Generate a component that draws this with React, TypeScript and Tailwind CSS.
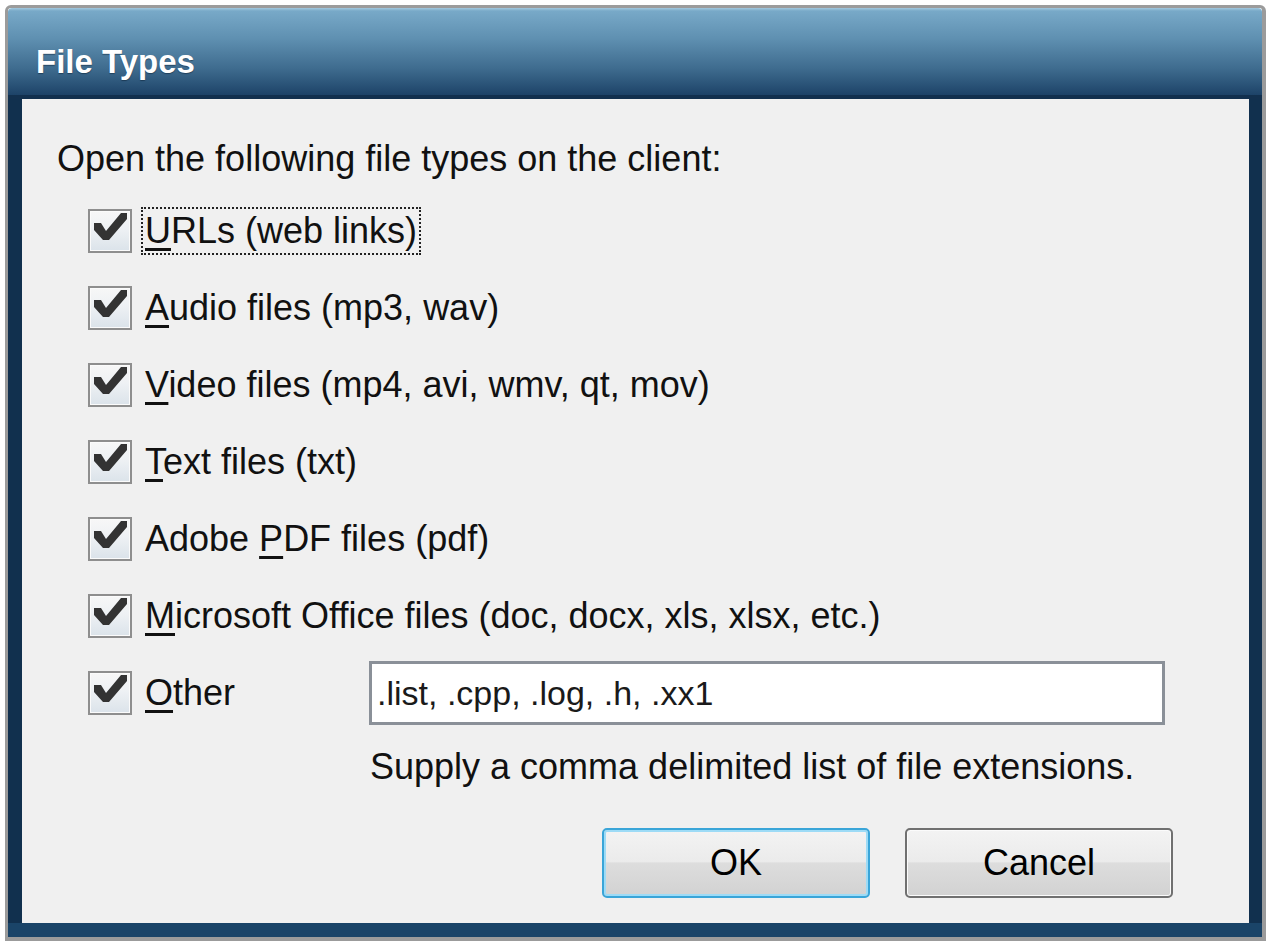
import React from 'react'

const font = { fontFamily: '"Liberation Sans", Arial, sans-serif' }

type Row = { pre?: string; key: string; rest: string; focus?: boolean }

const rows: Row[] = [
  { key: 'U', rest: 'RLs (web links)', focus: true },
  { key: 'A', rest: 'udio files (mp3, wav)' },
  { key: 'V', rest: 'ideo files (mp4, avi, wmv, qt, mov)' },
  { key: 'T', rest: 'ext files (txt)' },
  { pre: 'Adobe ', key: 'P', rest: 'DF files (pdf)' },
  { key: 'M', rest: 'icrosoft Office files (doc, docx, xls, xlsx, etc.)' },
]

const CheckBox = () => (
  <div className="flex-shrink-0 w-[44px] h-[44px] border-2 border-[#8e8e8e] bg-[linear-gradient(to_bottom,#f7f7f7_0%,#eef1f4_45%,#dbe3ea_100%)] shadow-[inset_0_0_0_1px_#fbfbfb]">
    <svg viewBox="0 0 40 40" className="w-[40px] h-[40px]">
      <polygon points="4,12 11,12 16,20 31,2 37,2 37,8 19,29 13,29 4,19" fill="#333333" />
    </svg>
  </div>
)

const Label = ({ row }: { row: Row }) => (
  <span
    className={`inline-block px-[2px] py-[2px] border-2 whitespace-nowrap ${
      row.focus ? 'border-dotted border-[#222]' : 'border-transparent'
    }`}
  >
    {row.pre}
    <span className="underline decoration-[3px] underline-offset-[5px]">{row.key}</span>
    {row.rest}
  </span>
)

const Button = ({ text, focused }: { text: string; focused?: boolean }) => (
  <div
    className={`flex justify-center items-center w-[268px] h-[70px] rounded-[5px] border-2 bg-[linear-gradient(to_bottom,#f3f3f3_0%,#ebebeb_48%,#dddddd_50%,#d2d2d2_100%)] text-[36px] leading-[40px] text-black ${
      focused
        ? 'border-[#3aa5d8] shadow-[inset_0_0_0_2px_#9ddbf6]'
        : 'border-[#707070] shadow-[inset_0_0_0_1px_#fbfbfb]'
    }`}
  >
    {text}
  </div>
)

export default function App() {
  return (
    <div className="w-[1276px] h-[943px] bg-white pt-[5px] pl-[5px]" style={font}>
      <div className="flex flex-col w-[1261px] h-[936px] rounded-t-[6px] border-[3px] border-r-4 border-b-4 border-[#9b9b9b] overflow-hidden">
        <div className="flex-shrink-0 h-[87px] pl-[28px] pt-[34px] rounded-t-[4px] bg-[linear-gradient(to_bottom,#a2c8de_0px,#78a9c8_3px,#5f90b1_35%,#3e6b8e_70%,#1d4368_100%)]">
          <p className="text-[33px] leading-[40px] font-bold text-white [text-shadow:0_1px_1px_rgba(10,30,50,0.5)]">
            File Types
          </p>
        </div>
        <div className="flex-shrink-0 h-[4px] bg-[#12304e]" />
        <div className="flex flex-grow">
          <div className="w-[14px] bg-[#11304e]" />
          <div className="flex flex-col flex-grow bg-[#f0f0f0] pt-[40px] pl-[35px] text-[36px] leading-[40px] text-[#111]">
            <p className="h-[40px]">Open the following file types on the client:</p>
            <div className="flex flex-col gap-[33px] mt-[30px] ml-[31px]">
              {rows.map((row) => (
                <div key={row.key} className="flex items-center h-[44px] gap-[9px]">
                  <CheckBox />
                  <Label row={row} />
                </div>
              ))}
              <div className="flex items-center h-[44px] gap-[9px]">
                <CheckBox />
                <div className="w-[219px]">
                  <Label row={{ key: 'O', rest: 'ther' }} />
                </div>
                <div className="flex items-center flex-shrink-0 w-[796px] h-[64px] border-[3px] border-[#8a9098] bg-white pl-[5px] text-[34px] text-[#1a1a1a]">
                  .list, .cpp, .log, .h, .xx1
                </div>
              </div>
            </div>
            <p className="h-[40px] mt-[32px] ml-[313px] whitespace-nowrap">
              Supply a comma delimited list of file extensions.
            </p>
            <div className="flex justify-end gap-[35px] mt-[41px] pr-[76px]">
              <Button text="OK" focused />
              <Button text="Cancel" />
            </div>
          </div>
          <div className="w-[13px] bg-[#11304e]" />
        </div>
        <div className="flex-shrink-0 h-[14px] bg-[#1a4468]" />
      </div>
    </div>
  )
}
